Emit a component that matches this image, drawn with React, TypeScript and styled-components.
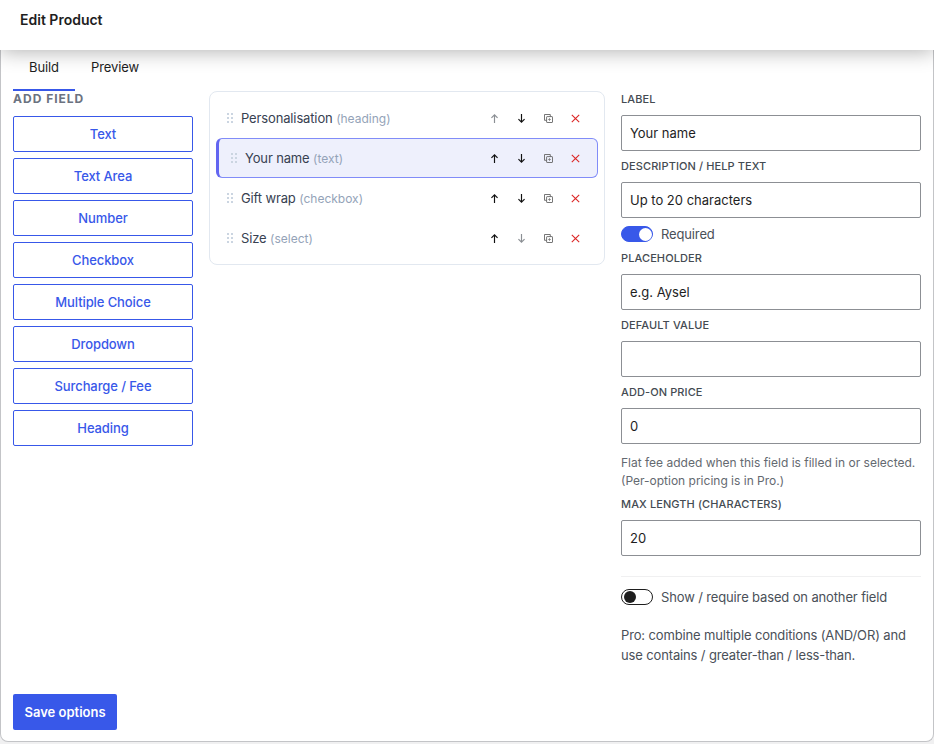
import React from "react";
import styled, { createGlobalStyle } from "styled-components";

const Global = createGlobalStyle`
  html, body { margin: 0; padding: 0; background: #f0f0f1; }
  * { box-sizing: border-box; }
  body { font-family: Inter, "Liberation Sans", sans-serif; color: #1e1e1e; }
`;
const Page = styled.div`
  width: 934px; height: 744px; display: flex; flex-direction: column; overflow: hidden;
`;
const Header = styled.header`
  height: 50px; flex: none; background: #fff; position: relative; z-index: 2;
  display: flex; align-items: center; padding: 0 20px 12px;
  box-shadow: 0 2px 20px rgba(0,0,0,.3);
`;
const Title = styled.h1`
  margin: 0; font-size: 14px; font-weight: 600; color: #1e1e1e;
`;
const Panel = styled.main`
  height: 692px; flex: none; background: #fff; display: flex; flex-direction: column; position: relative;
  border: 1px solid #c3c4c7; border-top: 0; border-radius: 0 0 8px 8px; padding: 0 12px 11px;
`;
const Tabs = styled.nav`
  display: flex; height: 41px; flex: none;
`;
const Tab = styled.div<{ $active?: boolean }>`
  padding: 9px 16px 0; font-size: 13px; line-height: 16px; letter-spacing: -.1px; color: #1e1e1e; height: 41px;
  min-width: 62px;
  border-bottom: 2px solid ${p => (p.$active ? "#3858e9" : "transparent")};
`;
const Columns = styled.div`
  display: grid; grid-template-columns: 180px 396px 300px; gap: 16px; flex: 1; min-height: 0;
`;
const Left = styled.section`
  display: flex; flex-direction: column; gap: 6px;
`;
const AddTitle = styled.div`
  font-size: 12px; line-height: 16px; font-weight: 700; letter-spacing: 1px; color: #6b7280; height: 19px;
`;
const AddButton = styled.button`
  height: 36px; background: #fff; border: 1px solid #3858e9; border-radius: 2px; color: #3858e9;
  font: 500 13px Inter, sans-serif; letter-spacing: -.1px; padding: 0;
`;
const Card = styled.section`
  align-self: start; border: 1px solid #e2e8f0; border-radius: 8px; padding: 6px; background: #fff;
`;
const Row = styled.div<{ $selected?: boolean }>`
  height: 40px; display: flex; align-items: center; border-radius: 6px; font-size: 13px;
  padding: 0 10px 0 ${p => (p.$selected ? "12px" : "10px")};
  border: 1px solid ${p => (p.$selected ? "#818cf8" : "transparent")};
  border-left: ${p => (p.$selected ? "3px solid #6366f1" : "1px solid transparent")};
  background: ${p => (p.$selected ? "#eef0fc" : "transparent")};
`;
const Handle = styled.svg`
  width: 6px; height: 10px; margin-right: 8px; flex: none; fill: #cbd5e1;
`;
const FieldName = styled.span`
  color: #374151; flex: 1; white-space: nowrap; letter-spacing: -.14px;
`;
const FieldType = styled.span`
  color: #94a3b8; font-size: 12px; letter-spacing: 0;
`;
const Actions = styled.div`
  display: flex; gap: 10.7px; margin-right: 4px;
`;
const IconBtn = styled.span`
  width: 16px; height: 16px; display: flex; align-items: center; justify-content: center;
  svg { display: block; }
`;
const Right = styled.section`
  display: flex; flex-direction: column;
`;
const Label = styled.label`
  display: block; font-size: 11px; line-height: 16px; font-weight: 500; letter-spacing: .1px; color: #444b52;
  text-transform: uppercase; margin: 7px 0 8px;
  &:first-child { margin-top: 0; }
`;
const Input = styled.input`
  display: block; width: 300px; height: 36px; border: 1px solid #8c8f94; border-radius: 2px; padding: 0 8px;
  font: 400 13px Inter, sans-serif; color: #1e1e1e; background: #fff; outline: none; flex: none;
`;
const ToggleRow = styled.div`
  display: flex; align-items: center; gap: 8px; height: 16px; font-size: 13px; letter-spacing: -.14px; color: #4a5058;
  margin-top: 8px; margin-bottom: 1px;
`;
const Track = styled.span<{ $on?: boolean }>`
  width: 32px; height: 16px; border-radius: 8px; display: flex; align-items: center; flex: none;
  background: ${p => (p.$on ? "#3858e9" : "#fff")};
  border: 1px solid ${p => (p.$on ? "#3858e9" : "#1e1e1e")};
  justify-content: ${p => (p.$on ? "flex-end" : "flex-start")};
  padding: 0 ${p => (p.$on ? "0" : "2px")};
`;
const Knob = styled.span<{ $on?: boolean }>`
  width: ${p => (p.$on ? "13px" : "12px")}; height: ${p => (p.$on ? "13px" : "12px")};
  border-radius: 50%; background: ${p => (p.$on ? "#fff" : "#1e1e1e")};
`;
const Help = styled.p`
  margin: 10px 0 0; height: 35px; font-size: 12px; line-height: 18px; color: #646970;
`;
const Rule = styled.hr`
  border: 0; border-top: 1px solid #f0f0f1; width: 100%; margin: 20px 0 4px;
`;
const ProNote = styled.p`
  margin: 19px 0 0; font-size: 13px; line-height: 20px; letter-spacing: -.14px; color: #4a5058;
`;
const Save = styled.button`
  position: absolute; left: 12px; bottom: 11px; height: 36px; width: 104px; border: 0; border-radius: 2px;
  background: #3858e9; color: #fff; font: 600 13px Inter, sans-serif; padding: 0;
`;

const DotGrip = () => (
  <Handle viewBox="0 0 6 10">
    {[1, 5, 9].flatMap(y => [1, 5].map(x => <rect key={`${x}${y}`} x={x - 1} y={y - 1} width="2" height="2" />))}
  </Handle>
);
const Arrow = ({ up, dim }: { up?: boolean; dim?: boolean }) => (
  <svg width="9" height="9" viewBox="0 0 10 10" fill="none" stroke={dim ? "#8b8f94" : "#111"} strokeWidth="1.3"
    style={up ? undefined : { transform: "rotate(180deg)" }}>
    <path d="M5 10V1M1.6 4.4 5 1l3.4 3.4" />
  </svg>
);
const Copy = () => (
  <svg width="9" height="9" viewBox="0 0 9 9" fill="none" stroke="#666" strokeWidth="0.9">
    <rect x="2.6" y="2.6" width="5.9" height="5.9" rx=".5" />
    <path d="M2.6 6.3H.5V.5h5.8v2.1" />
    <path d="M4 5.5h3M5.5 4v3" strokeWidth=".6" />
  </svg>
);
const Cross = () => (
  <svg width="9" height="9" viewBox="0 0 9 9" fill="none" stroke="#dc2626" strokeWidth="1.1">
    <path d="M.8.8l7.4 7.4M8.2.8.8 8.2" />
  </svg>
);

const addButtons = ["Text", "Text Area", "Number", "Checkbox", "Multiple Choice", "Dropdown", "Surcharge / Fee", "Heading"];
const fields = [
  { name: "Personalisation", type: "heading", upDim: true },
  { name: "Your name", type: "text", selected: true },
  { name: "Gift wrap", type: "checkbox" },
  { name: "Size", type: "select", downDim: true },
];

export default function App() {
  return (
    <Page>
      <Global />
      <Header><Title>Edit Product</Title></Header>
      <Panel>
        <Tabs>
          <Tab $active>Build</Tab>
          <Tab>Preview</Tab>
        </Tabs>
        <Columns>
          <Left>
            <AddTitle>ADD FIELD</AddTitle>
            {addButtons.map(b => <AddButton key={b}>{b}</AddButton>)}
          </Left>
          <Card>
            {fields.map(f => (
              <Row key={f.name} $selected={f.selected}>
                <DotGrip />
                <FieldName>{f.name} <FieldType>({f.type})</FieldType></FieldName>
                <Actions>
                  <IconBtn><Arrow up dim={f.upDim} /></IconBtn>
                  <IconBtn><Arrow dim={f.downDim} /></IconBtn>
                  <IconBtn><Copy /></IconBtn>
                  <IconBtn><Cross /></IconBtn>
                </Actions>
              </Row>
            ))}
          </Card>
          <Right>
            <Label>Label</Label>
            <Input readOnly value="Your name" />
            <Label>Description / help text</Label>
            <Input readOnly value="Up to 20 characters" />
            <ToggleRow><Track $on><Knob $on /></Track>Required</ToggleRow>
            <Label>Placeholder</Label>
            <Input readOnly value="e.g. Aysel" />
            <Label>Default value</Label>
            <Input readOnly value="" />
            <Label>Add-on price</Label>
            <Input readOnly value="0" />
            <Help>Flat fee added when this field is filled in or selected. (Per-option pricing is in Pro.)</Help>
            <Label>Max length (characters)</Label>
            <Input readOnly value="20" />
            <Rule />
            <ToggleRow><Track><Knob /></Track>Show / require based on another field</ToggleRow>
            <ProNote>Pro: combine multiple conditions (AND/OR) and use contains / greater-than / less-than.</ProNote>
          </Right>
        </Columns>
        <Save>Save options</Save>
      </Panel>
    </Page>
  );
}
